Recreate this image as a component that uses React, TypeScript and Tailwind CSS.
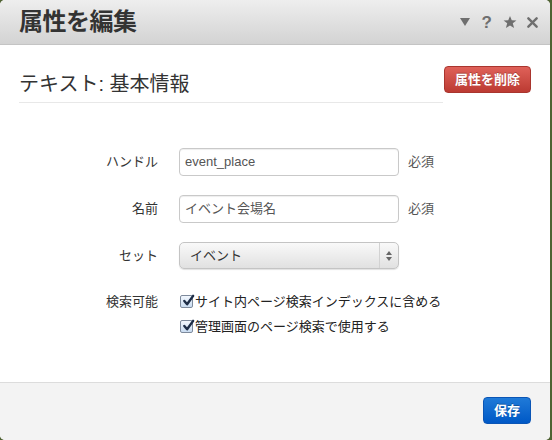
import { ReactNode } from 'react'

function Row({ label, children }: { label: string; children: ReactNode }) {
  return (
    <div className="flex items-center">
      <div className="w-[139px] text-right text-[13px] text-[#333]">{label}</div>
      <div className="ml-[21px] flex items-center">{children}</div>
    </div>
  )
}

function Check({ label }: { label: string }) {
  return (
    <label className="flex items-center h-[25px] text-[13px] text-[#222]">
      <span className="w-[13px] h-[13px] rounded-[2px] border border-[#7d8a9c] bg-gradient-to-b from-[#f2f7fd] to-[#c9dcf1] relative mr-[2px]">
        <svg viewBox="0 0 14 14" className="absolute -top-[2px] left-[1px] w-[13px] h-[13px]">
          <path d="M2.5 7.5 L5.5 11 L12 2" fill="none" stroke="#1d2d47" strokeWidth="2.6" strokeLinecap="round" strokeLinejoin="round" />
        </svg>
      </span>
      {label}
    </label>
  )
}

export default function App() {
  return (
    <div className="w-[552px] h-[440px] bg-[#4f6233] font-['Liberation_Sans','Noto_Sans_CJK_JP',sans-serif]">
      <div className="w-[550px] h-[440px] bg-white flex flex-col rounded-[5px] overflow-hidden">
        {/* title bar */}
        <div className="h-[45px] shrink-0 flex items-center pl-[19px] pr-[12px] border-b border-[#c4c4c4] bg-gradient-to-b from-[#eeeeee] to-[#d3d3d3]">
          <h1 className="text-[24px] font-bold text-[#333] leading-none tracking-[-0.5px]">属性を編集</h1>
          <div className="ml-auto flex items-center text-[#6f6f6f]">
            <svg viewBox="0 0 10 8" className="w-[10px] h-[8px]">
              <path d="M0 0 H10 L5 8 Z" fill="currentColor" />
            </svg>
            <span className="ml-[12px] text-[17px] font-bold leading-none">?</span>
            <svg viewBox="0 0 24 24" className="ml-[11px] w-[14px] h-[14px]">
              <path d="M12 1.5 L15 9 L23 9.3 L16.8 14.3 L19 22.3 L12 17.8 L5 22.3 L7.2 14.3 L1 9.3 L9 9 Z" fill="currentColor" />
            </svg>
            <svg viewBox="0 0 12 12" className="ml-[10px] w-[11px] h-[11px]">
              <path d="M1.5 1.5 L10.5 10.5 M10.5 1.5 L1.5 10.5" stroke="currentColor" strokeWidth="2.6" strokeLinecap="round" />
            </svg>
          </div>
        </div>

        {/* body */}
        <div className="flex-1 px-[19px] pt-[21px]">
          <div className="flex items-start">
            <div className="flex-1 h-[37px] pt-[4px] border-b border-[#e8e8e8]">
              <h2 className="text-[20px] leading-[28px] text-[#333]">テキスト: 基本情報</h2>
            </div>
            <button className="ml-px w-[87px] h-[27px] rounded-[4px] border border-[#a9352e] bg-gradient-to-b from-[#df6159] to-[#bc3a32] text-white text-[13px] font-bold [text-shadow:0_-1px_0_rgba(0,0,0,0.25)]">
              属性を削除
            </button>
          </div>

          <div className="mt-[45px] flex flex-col">
            <Row label="ハンドル">
              <div className="w-[220px] h-[28px] rounded-[4px] border border-[#c9c9c9] flex items-center pl-[5px] text-[13px] text-[#555] shadow-[inset_0_1px_1px_rgba(0,0,0,0.07)]">
                event_place
              </div>
              <span className="ml-[9px] text-[13px] text-[#555]">必須</span>
            </Row>
            <div className="mt-[19px]">
              <Row label="名前">
                <div className="w-[220px] h-[28px] rounded-[4px] border border-[#c9c9c9] flex items-center pl-[5px] text-[13px] text-[#555] shadow-[inset_0_1px_1px_rgba(0,0,0,0.07)]">
                  イベント会場名
                </div>
                <span className="ml-[9px] text-[13px] text-[#555]">必須</span>
              </Row>
            </div>
            <div className="mt-[19px]">
              <Row label="セット">
                <div className="w-[220px] h-[27px] rounded-[5px] border border-[#c4c4c4] flex items-center bg-gradient-to-b from-[#f9f9f9] to-[#e1e1e1] shadow-[0_1px_1px_rgba(0,0,0,0.12)]">
                  <span className="flex-1 pl-[10px] text-[13px] text-[#333]">イベント</span>
                  <div className="w-[19px] h-full border-l border-[#d2d2d2] flex flex-col items-center justify-center gap-[2px] text-[#666]">
                    <svg viewBox="0 0 6 4" className="w-[6px] h-[4px]"><path d="M0 4 L3 0 L6 4 Z" fill="currentColor" /></svg>
                    <svg viewBox="0 0 6 4" className="w-[6px] h-[4px]"><path d="M0 0 L6 0 L3 4 Z" fill="currentColor" /></svg>
                  </div>
                </div>
              </Row>
            </div>
            <div className="mt-[20px] flex items-start">
              <div className="w-[139px] text-right text-[13px] text-[#333] leading-[25px]">検索可能</div>
              <div className="ml-[22px] flex flex-col">
                <Check label="サイト内ページ検索インデックスに含める" />
                <Check label="管理画面のページ検索で使用する" />
              </div>
            </div>
          </div>
        </div>

        {/* footer */}
        <div className="h-[58px] shrink-0 border-t border-[#dcdcdc] bg-[#f3f3f3] flex items-start justify-end pr-[19px] pt-[14px]">
          <button className="w-[48px] h-[27px] rounded-[4px] border border-[#0a55b5] bg-gradient-to-b from-[#1f7ad8] to-[#0058c6] text-white text-[13px] font-bold [text-shadow:0_-1px_0_rgba(0,0,0,0.25)]">
            保存
          </button>
        </div>
      </div>
    </div>
  )
}
